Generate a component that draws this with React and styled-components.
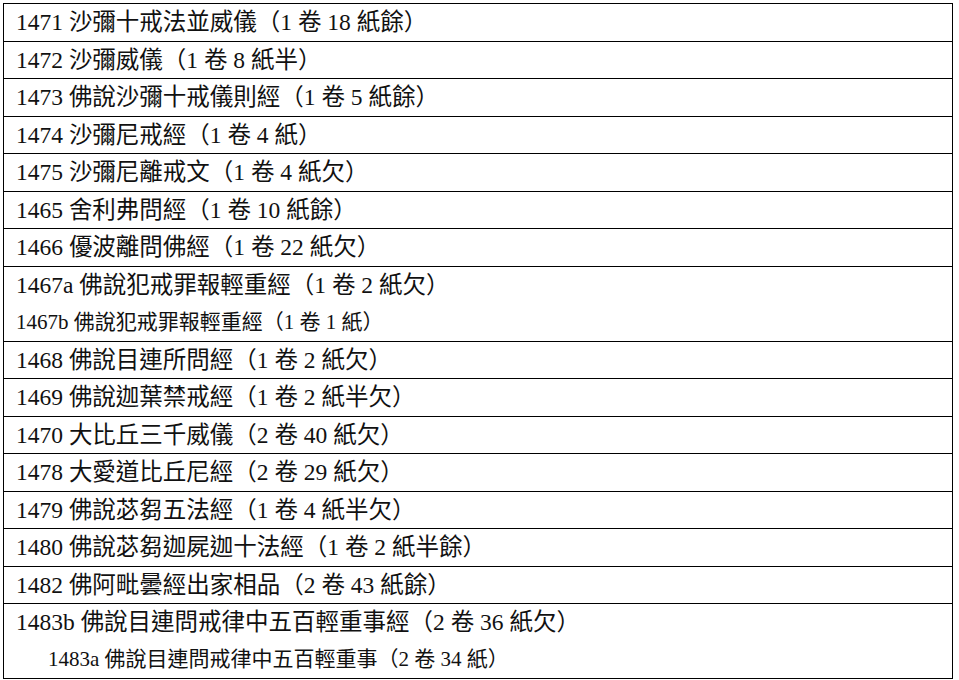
import React from "react";
import styled, { createGlobalStyle } from "styled-components";

const entries = [
  { lines: [{ text: "1471 沙彌十戒法並威儀（1 卷 18 紙餘）" }] },
  { lines: [{ text: "1472 沙彌威儀（1 卷 8 紙半）" }] },
  { lines: [{ text: "1473 佛說沙彌十戒儀則經（1 卷 5 紙餘）" }] },
  { lines: [{ text: "1474 沙彌尼戒經（1 卷 4 紙）" }] },
  { lines: [{ text: "1475 沙彌尼離戒文（1 卷 4 紙欠）" }] },
  { lines: [{ text: "1465 舍利弗問經（1 卷 10 紙餘）" }] },
  { lines: [{ text: "1466 優波離問佛經（1 卷 22 紙欠）" }] },
  {
    lines: [
      { text: "1467a 佛說犯戒罪報輕重經（1 卷 2 紙欠）" },
      { text: "1467b 佛說犯戒罪報輕重經（1 卷 1 紙）", small: true },
    ],
  },
  { lines: [{ text: "1468 佛說目連所問經（1 卷 2 紙欠）" }] },
  { lines: [{ text: "1469 佛說迦葉禁戒經（1 卷 2 紙半欠）" }] },
  { lines: [{ text: "1470 大比丘三千威儀（2 卷 40 紙欠）" }] },
  { lines: [{ text: "1478 大愛道比丘尼經（2 卷 29 紙欠）" }] },
  { lines: [{ text: "1479 佛說苾芻五法經（1 卷 4 紙半欠）" }] },
  { lines: [{ text: "1480 佛說苾芻迦屍迦十法經（1 卷 2 紙半餘）" }] },
  { lines: [{ text: "1482 佛阿毗曇經出家相品（2 卷 43 紙餘）" }] },
  {
    lines: [
      { text: "1483b 佛說目連問戒律中五百輕重事經（2 卷 36 紙欠）" },
      { text: "1483a 佛說目連問戒律中五百輕重事（2 卷 34 紙）", small: true, indent: true },
    ],
  },
];

const App = () => {
  return (
    <>
      <GlobalStyle />
      <Page>
        <Table>
          {entries.map((entry, i) => (
            <Row key={i}>
              {entry.lines.map((line, j) => (
                <Line
                  key={j}
                  $small={line.small}
                  $indent={line.indent}
                  $double={entry.lines.length > 1}
                >
                  {line.text}
                </Line>
              ))}
            </Row>
          ))}
        </Table>
      </Page>
    </>
  );
};

const GlobalStyle = createGlobalStyle`
  body {
    margin: 0;
    background: #fff;
  }
`;

const Page = styled.div`
  padding: 3px 0 0 3px;
`;

const Table = styled.div`
  width: 950px;
  box-sizing: border-box;
  border: 1px solid #000;
  display: flex;
  flex-direction: column;
`;

const Row = styled.div`
  display: flex;
  flex-direction: column;
  border-bottom: 1px solid #000;
  &:last-child {
    border-bottom: none;
  }
`;

const Line = styled.div`
  height: ${(p) => (p.$double ? "37px" : "36.5px")};
  line-height: ${(p) => (p.$double ? "37px" : "36.5px")};
  padding-left: ${(p) => (p.$indent ? "44px" : "12px")};
  font-family: "Liberation Serif", "Noto Sans CJK TC", serif;
  font-size: ${(p) => (p.$small ? "21px" : "23.5px")};
  color: #111;
  white-space: nowrap;
`;

export default App;
